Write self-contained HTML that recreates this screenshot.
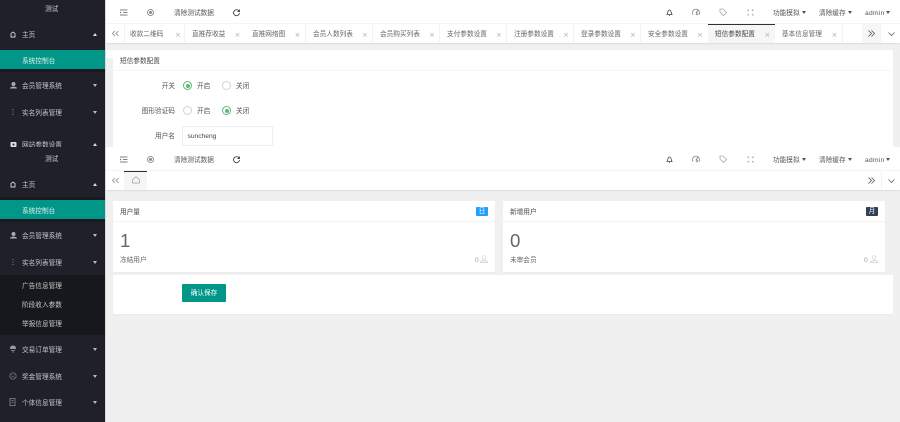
<!DOCTYPE html>
<html lang="zh-CN"><head><meta charset="utf-8"><title>测试</title>
<style>
html,body{margin:0;padding:0;width:900px;height:422px;overflow:hidden;background:#f0f0f0}
body{font-family:"Liberation Sans","Noto Sans CJK SC",sans-serif;font-size:6.67px;color:#555;position:relative}
.b{position:absolute}
.t{position:absolute;line-height:10px;white-space:nowrap;font-size:6.67px;margin-top:1.5px}
.s{color:#c8c8ca}
.tab{color:#666}
.x{position:absolute;line-height:10px;font-size:7px;color:#aaa;font-family:"DejaVu Sans",sans-serif;margin-top:1.5px}
.sep{position:absolute;width:1px;background:#f3f3f3}
.cu{position:absolute;width:0;height:0;border-left:2.5px solid transparent;border-right:2.5px solid transparent;border-bottom:3px solid #ddd}
.cd{position:absolute;width:0;height:0;border-left:2.5px solid transparent;border-right:2.5px solid transparent;border-top:3px solid #bbb}
.hc{position:absolute;width:0;height:0;border-left:2.5px solid transparent;border-right:2.5px solid transparent;border-top:3px solid #555}
svg{position:absolute;overflow:visible;fill:none}
.r{position:absolute;width:9px;height:9px;border-radius:50%;box-sizing:border-box;border:1px solid #d2d2d2;background:#fff}
.r.on{border-color:#5fb878}
.r.on:after{content:"";position:absolute;left:1.5px;top:1.5px;width:4px;height:4px;border-radius:50%;background:#5fb878}
#wrap{position:absolute;left:0;top:0;width:900px;height:422px;filter:blur(.3px)}
</style></head><body><div id="wrap">

<!-- sidebar -->
<div class="b" style="left:0;top:0;width:105px;height:422px;background:#1f2029"></div>
<div class="b" style="left:105px;top:0;width:1px;height:422px;background:#d8d8d8"></div>
<div class="t s" style="left:45px;top:3px">测试</div>
<svg style="left:10px;top:31px" width="6" height="7"><path d="M1 2.500 L3 1 L5 2.500 V6 H1Z" stroke="#d5d5d8" stroke-width=".9"/></svg>
<div class="t s" style="left:22px;top:29px">主页</div>
<div class="cu" style="left:93px;top:33px"></div>
<div class="b" style="left:0;top:50px;width:105px;height:19px;background:#009688"></div>
<div class="b" style="left:0;top:69px;width:105px;height:3px;background:#191a20"></div>
<div class="t" style="left:22px;top:55px;color:#d8eeeb">系统控制台</div>
<svg style="left:9px;top:81px" width="9" height="8"><path d="M4.500 1a1.500 1.500 0 0 1 0 4 1.500 1.500 0 0 1 0-4zM1 7.500C1 5 8 5 8 7.500Z" fill="#aaa"/></svg>
<div class="t s" style="left:22px;top:80px">会员管理系统</div>
<div class="cd" style="left:93px;top:84px"></div>
<svg style="left:12px;top:108px" width="2" height="8"><path d="M1 1V2M1 3.500V4.500M1 6V7" stroke="#888"/></svg>
<div class="t s" style="left:22px;top:107px">实名列表管理</div>
<div class="cd" style="left:93px;top:111px"></div>
<svg style="left:10px;top:141px" width="7" height="6"><rect x=".5" y="1" width="6" height="5" rx="1" fill="#ddd"/><circle cx="3.500" cy="3.500" r="1" fill="#1f2029"/></svg>
<div class="t s" style="left:22px;top:139px">网站参数设置</div>
<div class="cu" style="left:93px;top:143px"></div>

<!-- top layer -->
<div class="b" style="left:106px;top:0;width:794px;height:23px;background:#fff"></div>
<svg style="left:120px;top:9px" width="8" height="7"><path d="M0 1H7.500M3 3.500H7.500M0 6H7.500" stroke="#555" stroke-width=".8"/><path d="M0 2.500V4.500L1.500 3.500Z" fill="#777"/></svg>
<svg style="left:147px;top:9px" width="7" height="7"><circle cx="3.500" cy="3.500" r="3" stroke="#777" stroke-width=".8"/><circle cx="3.500" cy="3.500" r="1.500" fill="#888"/></svg>
<div class="t" style="left:174px;top:7px">清除测试数据</div>
<svg style="left:233px;top:9px" width="7" height="7"><path d="M6 2A3 3 0 1 0 6.500 4M6.500 .5V2.500H4.500" stroke="#444" stroke-width=".9"/></svg>
<svg style="left:666px;top:9px" width="7" height="7"><path d="M1 5.500C2 4.500 1.500 1 3.500 1S5 4.500 6 5.500ZM3 6.500H4" stroke="#444" stroke-width=".8"/></svg>
<svg style="left:692px;top:9px" width="8" height="7"><path d="M1 5.500A3.500 3.500 0 1 1 7 5.500" stroke="#888" stroke-width=".9"/><path d="M4 4L6 1.500" stroke="#777"/><circle cx="5" cy="5" r="1.300" fill="#aaa"/></svg>
<svg style="left:719px;top:8px" width="8" height="8"><path d="M1 1H4L7.500 4.500 4.500 7.500 1 4Z" stroke="#aaa" stroke-width=".8"/></svg>
<svg style="left:747px;top:9px" width="7" height="7"><path d="M.5 .5L2 2M6.500 .5L5 2M.5 6.500L2 5M6.500 6.500L5 5" stroke="#889" stroke-width=".8"/></svg>
<div class="t" style="left:773px;top:7px">功能模拟</div><div class="hc" style="left:802px;top:10.500px"></div>
<div class="t" style="left:819px;top:7px">清除缓存</div><div class="hc" style="left:848px;top:10.500px"></div>
<div class="t" style="left:865px;top:7px;letter-spacing:.3px">admin</div><div class="hc" style="left:886px;top:10.500px"></div>

<div class="b" style="left:106px;top:23px;width:794px;height:20px;background:#fff;border-top:1px solid #f4f4f4;box-sizing:border-box;box-shadow:0 1px 1px #ddd"></div>
<svg style="left:112px;top:31px" width="7" height="5"><path d="M3 0L.5 2.500 3 5M6.500 0L4 2.500 6.500 5" stroke="#888" stroke-width=".8"/></svg>
<div class="sep" style="left:124px;top:24px;height:19px"></div>
<div class="t tab" style="left:130px;top:28px">收款二维码</div><div class="x" style="left:175px;top:28px">×</div>
<div class="sep" style="left:184px;top:24px;height:19px"></div>
<div class="t tab" style="left:192px;top:28px">直推荐收益</div><div class="x" style="left:234.500px;top:28px">×</div>
<div class="t tab" style="left:252px;top:28px">直推网络图</div><div class="x" style="left:294.500px;top:28px">×</div>
<div class="sep" style="left:305px;top:24px;height:19px"></div>
<div class="t tab" style="left:313px;top:28px">会员人数列表</div><div class="x" style="left:362px;top:28px">×</div>
<div class="sep" style="left:372px;top:24px;height:19px"></div>
<div class="t tab" style="left:380px;top:28px">会员购买列表</div><div class="x" style="left:429px;top:28px">×</div>
<div class="sep" style="left:439px;top:24px;height:19px"></div>
<div class="t tab" style="left:447px;top:28px">支付参数设置</div><div class="x" style="left:496px;top:28px">×</div>
<div class="sep" style="left:506px;top:24px;height:19px"></div>
<div class="t tab" style="left:514px;top:28px">注册参数设置</div><div class="x" style="left:563px;top:28px">×</div>
<div class="sep" style="left:573px;top:24px;height:19px"></div>
<div class="t tab" style="left:581px;top:28px">登录参数设置</div><div class="x" style="left:630px;top:28px">×</div>
<div class="sep" style="left:640px;top:24px;height:19px"></div>
<div class="t tab" style="left:648px;top:28px">安全参数设置</div><div class="x" style="left:697px;top:28px">×</div>
<div class="b" style="left:708px;top:24px;width:67px;height:19px;background:#f6f6f6;border-top:1px solid #2f2f3a;box-sizing:border-box"></div>
<div class="t" style="left:715px;top:28px;color:#444">短信参数配置</div><div class="x" style="left:764.500px;top:28px">×</div>
<div class="t tab" style="left:782px;top:28px">基本信息管理</div><div class="x" style="left:831.500px;top:28px">×</div>
<div class="sep" style="left:842px;top:24px;height:19px"></div>
<div class="b" style="left:862px;top:24px;width:19px;height:19px;background:#f6f6f6"></div>
<svg style="left:868px;top:30px" width="7" height="7"><path d="M.5 .5L3.500 3.500 .5 6.500M3.500 .5L6.500 3.500 3.500 6.500" stroke="#555" stroke-width=".8"/></svg>
<svg style="left:888px;top:32px" width="7" height="4"><path d="M.5 .5L3.500 3.500 6.500 .5" stroke="#666" stroke-width=".8"/></svg>

<div class="b" style="left:106px;top:50px;width:7px;height:8px;background:#fff"></div>
<div class="b" style="left:113px;top:50px;width:780px;height:100px;background:#fff;border-radius:1px 1px 0 0"></div>
<div class="b" style="left:113px;top:70px;width:780px;height:1px;background:#f6f6f6"></div>
<div class="t" style="left:120px;top:55px;color:#444">短信参数配置</div>
<div class="t" style="left:161.700px;top:80px">开关</div>
<div class="r on" style="left:183px;top:81px"></div><div class="t" style="left:197px;top:80px">开启</div>
<div class="r" style="left:222px;top:81px"></div><div class="t" style="left:236px;top:80px">关闭</div>
<div class="t" style="left:141.700px;top:105px">图形验证码</div>
<div class="r" style="left:183px;top:106px"></div><div class="t" style="left:197px;top:105px">开启</div>
<div class="r on" style="left:222px;top:106px"></div><div class="t" style="left:236px;top:105px">关闭</div>
<div class="t" style="left:155px;top:130px">用户名</div>
<div class="b" style="left:182px;top:126px;width:91px;height:20px;background:#fff;border:1px solid #eee;box-sizing:border-box"></div>
<div class="t" style="left:187.500px;top:130px;color:#444">suncheng</div>

<!-- lower layer -->
<div class="b" style="left:106px;top:147px;width:794px;height:275px;background:#f0f0f0"></div>
<div class="b" style="left:106px;top:147px;width:794px;height:23px;background:#fff"></div>
<svg style="left:120px;top:156px" width="8" height="7"><path d="M0 1H7.500M3 3.500H7.500M0 6H7.500" stroke="#555" stroke-width=".8"/><path d="M0 2.500V4.500L1.500 3.500Z" fill="#777"/></svg>
<svg style="left:147px;top:156px" width="7" height="7"><circle cx="3.500" cy="3.500" r="3" stroke="#777" stroke-width=".8"/><circle cx="3.500" cy="3.500" r="1.500" fill="#888"/></svg>
<div class="t" style="left:174px;top:154px">清除测试数据</div>
<svg style="left:233px;top:156px" width="7" height="7"><path d="M6 2A3 3 0 1 0 6.500 4M6.500 .5V2.500H4.500" stroke="#444" stroke-width=".9"/></svg>
<svg style="left:666px;top:156px" width="7" height="7"><path d="M1 5.500C2 4.500 1.500 1 3.500 1S5 4.500 6 5.500ZM3 6.500H4" stroke="#444" stroke-width=".8"/></svg>
<svg style="left:692px;top:156px" width="8" height="7"><path d="M1 5.500A3.500 3.500 0 1 1 7 5.500" stroke="#888" stroke-width=".9"/><path d="M4 4L6 1.500" stroke="#777"/><circle cx="5" cy="5" r="1.300" fill="#aaa"/></svg>
<svg style="left:719px;top:155px" width="8" height="8"><path d="M1 1H4L7.500 4.500 4.500 7.500 1 4Z" stroke="#aaa" stroke-width=".8"/></svg>
<svg style="left:747px;top:156px" width="7" height="7"><path d="M.5 .5L2 2M6.500 .5L5 2M.5 6.500L2 5M6.500 6.500L5 5" stroke="#889" stroke-width=".8"/></svg>
<div class="t" style="left:773px;top:154px">功能模拟</div><div class="hc" style="left:802px;top:157.500px"></div>
<div class="t" style="left:819px;top:154px">清除缓存</div><div class="hc" style="left:848px;top:157.500px"></div>
<div class="t" style="left:865px;top:154px;letter-spacing:.3px">admin</div><div class="hc" style="left:886px;top:157.500px"></div>

<div class="b" style="left:106px;top:170px;width:794px;height:20px;background:#fff;border-top:1px solid #f4f4f4;box-sizing:border-box;box-shadow:0 1px 1px #ddd"></div>
<svg style="left:112px;top:178px" width="7" height="5"><path d="M3 0L.5 2.500 3 5M6.500 0L4 2.500 6.500 5" stroke="#888" stroke-width=".8"/></svg>
<div class="b" style="left:124px;top:171px;width:23px;height:19px;background:#f6f6f6;border-top:1px solid #2f2f3a;box-sizing:border-box"></div>
<svg style="left:132px;top:176px" width="8" height="8"><path d="M.5 3.500L4 .8 7.500 3.500 V7H.5Z" stroke="#999" stroke-width=".7"/></svg>
<svg style="left:868px;top:177px" width="7" height="7"><path d="M.5 .5L3.500 3.500 .5 6.500M3.500 .5L6.500 3.500 3.500 6.500" stroke="#555" stroke-width=".8"/></svg>
<div class="sep" style="left:881px;top:171px;height:19px"></div>
<svg style="left:888px;top:179px" width="7" height="4"><path d="M.5 .5L3.500 3.500 6.500 .5" stroke="#666" stroke-width=".8"/></svg>

<!-- stat cards -->
<div class="b" style="left:113px;top:201px;width:382px;height:71px;background:#fff;box-shadow:0 1px 1px #eaeaea"></div>
<div class="b" style="left:113px;top:221px;width:382px;height:1px;background:#f4f4f4"></div>
<div class="t" style="left:120px;top:206px;color:#444">用户量</div>
<div class="b" style="left:476px;top:207px;width:12px;height:9px;background:#1e9fff;border-radius:1px;color:#fff;text-align:center;line-height:9px;font-size:6.67px">日</div>
<div class="t" style="left:120px;top:229px;font-size:18.670px;line-height:20px;color:#666;font-family:'Liberation Sans',sans-serif">1</div>
<div class="t" style="left:120px;top:254px;color:#666">冻结用户</div>
<div class="t" style="left:475px;top:254px;color:#999">0</div>
<svg style="left:480px;top:255px" width="8" height="8"><circle cx="4" cy="2.500" r="1.800" stroke="#ccc" stroke-width=".7"/><path d="M.5 7.500C.5 5 7.500 5 7.500 7.500Z" stroke="#ccc" stroke-width=".7"/></svg>

<div class="b" style="left:503px;top:201px;width:382px;height:71px;background:#fff;border-radius:1px;box-shadow:0 1px 1px #eaeaea"></div>
<div class="b" style="left:503px;top:221px;width:382px;height:1px;background:#f4f4f4"></div>
<div class="t" style="left:510px;top:206px;color:#444">新增用户</div>
<div class="b" style="left:866px;top:207px;width:12px;height:9px;background:#2f4056;border-radius:1px;color:#fff;text-align:center;line-height:9px;font-size:6.67px">月</div>
<div class="t" style="left:510px;top:229px;font-size:18.670px;line-height:20px;color:#666;font-family:'Liberation Sans',sans-serif">0</div>
<div class="t" style="left:510px;top:254px;color:#666">未审会员</div>
<div class="t" style="left:864px;top:254px;color:#999">0</div>
<svg style="left:870px;top:255px" width="8" height="8"><circle cx="4" cy="2.500" r="1.800" stroke="#ccc" stroke-width=".7"/><path d="M.5 7.500C.5 5 7.500 5 7.500 7.500Z" stroke="#ccc" stroke-width=".7"/></svg>

<div class="b" style="left:113px;top:275px;width:780px;height:39px;background:#fff;border-radius:1px;box-shadow:0 1px 1px #eaeaea"></div>
<div class="b" style="left:182px;top:284px;width:44px;height:18px;background:#009688;border-radius:1px;color:#fff;text-align:center;line-height:19px;font-size:6.67px">确认保存</div>

<!-- lower sidebar -->
<div class="b" style="left:0;top:147px;width:105px;height:275px;background:#1f2029"></div>
<div class="t s" style="left:45px;top:153px">测试</div>
<svg style="left:10px;top:181px" width="6" height="7"><path d="M1 2.500 L3 1 L5 2.500 V6 H1Z" stroke="#d5d5d8" stroke-width=".9"/></svg>
<div class="t s" style="left:22px;top:179px">主页</div>
<div class="cu" style="left:93px;top:183px"></div>
<div class="b" style="left:0;top:197px;width:105px;height:3px;background:#191a20"></div>
<div class="b" style="left:0;top:200px;width:105px;height:19px;background:#009688"></div>
<div class="b" style="left:0;top:219px;width:105px;height:3px;background:#191a20"></div>
<div class="t" style="left:22px;top:205px;color:#d8eeeb">系统控制台</div>
<svg style="left:9px;top:231px" width="9" height="8"><path d="M4.500 1a1.500 1.500 0 0 1 0 4 1.500 1.500 0 0 1 0-4zM1 7.500C1 5 8 5 8 7.500Z" fill="#aaa"/></svg>
<div class="t s" style="left:22px;top:230px">会员管理系统</div>
<div class="cd" style="left:93px;top:234px"></div>
<svg style="left:12px;top:258px" width="2" height="8"><path d="M1 1V2M1 3.500V4.500M1 6V7" stroke="#888"/></svg>
<div class="t s" style="left:22px;top:257px">实名列表管理</div>
<div class="cd" style="left:93px;top:261px"></div>
<div class="b" style="left:0;top:275px;width:105px;height:60px;background:#17181d"></div>
<div class="t s" style="left:22px;top:280px">广告信息管理</div>
<div class="t s" style="left:22px;top:299px">阶段收入参数</div>
<div class="t s" style="left:22px;top:318px">举报信息管理</div>
<svg style="left:9px;top:345px" width="8" height="8"><path d="M1 3A3 2.500 0 0 1 7 3V4H1Z" fill="#999"/><path d="M2 5.500H6M3 7H5" stroke="#999" stroke-width=".8"/></svg>
<div class="t s" style="left:22px;top:344px">交易订单管理</div>
<div class="cd" style="left:93px;top:348px"></div>
<svg style="left:9px;top:372px" width="8" height="8"><circle cx="4" cy="4" r="3.200" stroke="#888" stroke-width=".7"/><path d="M2.500 5.300C3.500 4.500 4.500 4.500 5.500 5.300M2.500 3H3.300M4.700 3H5.500" stroke="#888" stroke-width=".6"/></svg>
<div class="t s" style="left:22px;top:371px">奖金管理系统</div>
<div class="cd" style="left:93px;top:375px"></div>
<svg style="left:9px;top:398px" width="8" height="8"><path d="M1 .5H6V7.500H1ZM2.500 2.500H4.500M2.500 4.500H4.500" stroke="#8a8a96" stroke-width=".8"/></svg>
<div class="t s" style="left:22px;top:397px">个体信息管理</div>
<div class="cd" style="left:93px;top:401px"></div>

</div></body></html>
